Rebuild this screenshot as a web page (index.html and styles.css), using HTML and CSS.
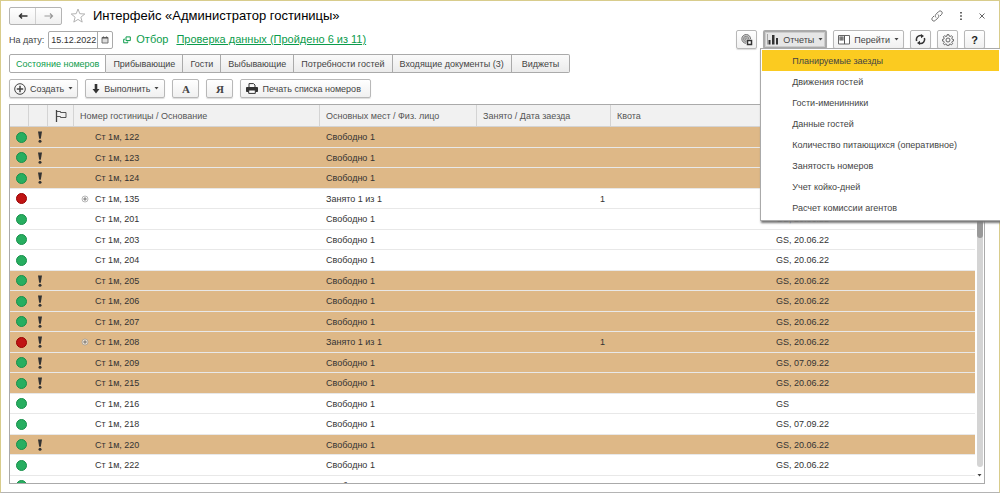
FILE: index.html
```html
<!DOCTYPE html>
<html lang="ru">
<head>
<meta charset="utf-8">
<title>Интерфейс «Администратор гостиницы»</title>
<link rel="stylesheet" href="styles.css">
</head>
<body>
<svg class="defs" aria-hidden="true">
  <symbol id="caret" viewBox="0 0 5 3"><path d="M.5 0h4L2.500 2.500z" fill="#444"/></symbol>
  <symbol id="bang" viewBox="0 0 6 12"><path d="M1 .5h4L3.800 7.800H2.200z" fill="#333"/><circle cx="3" cy="10.200" r="1.500" fill="#333"/></symbol>
  <symbol id="plus" viewBox="0 0 8 8"><circle cx="4" cy="4" r="3" fill="#fff" fill-opacity=".6" stroke="#999" stroke-width=".7"/><path d="M4 2.200v3.600M2.200 4h3.600" stroke="#666" stroke-width=".9"/></symbol>
</svg>
<main class="window">
  <header class="titlebar">
    <div class="history">
      <button class="history-btn" aria-label="Назад"><svg width="10" height="8" viewBox="0 0 10 8"><path d="M4 1.500 1.500 4 4 6.500M1.500 4H9.500" fill="none" stroke="#333" stroke-width="1.500"/></svg></button>
      <button class="history-btn" aria-label="Вперед"><svg width="10" height="8" viewBox="0 0 10 8"><path d="M6 1.500 8.500 4 6 6.500M8.500 4H.5" fill="none" stroke="#999" stroke-width="1.200"/></svg></button>
    </div>
    <svg class="star" width="16" height="15" viewBox="0 0 16 15"><path d="M8 1l1.800 4.700 5 .3-3.900 3.200 1.300 4.900L8 11.400l-4.200 2.700 1.300-4.900L1.200 6l5-.3z" fill="#fff" stroke="#aaa" stroke-width=".9"/></svg>
    <h1 class="title">Интерфейс «Администратор гостиницы»</h1>
    <div class="window-tools">
      <button class="plain" aria-label="Ссылка"><svg width="12" height="12" viewBox="0 0 12 12" fill="none" stroke="#666" stroke-width="1"><path d="M5 7.500C3.500 6 4.500 4.700 5.300 3.900L7.500 1.700C8.500.7 9.800.8 10.600 1.500s.8 2-.1 3L9 6M7 4.500c1.500 1.500.6 2.700-.2 3.500l-2.300 2.300c-1 1-2.300.9-3 .2s-.9-2 0-3L3 6"/></svg></button>
      <button class="plain" aria-label="Еще"><svg width="4" height="10" viewBox="0 0 4 10" fill="#666"><path d="M1 1h2v1.500H1zM1 4.200h2v1.500H1zM1 7.400h2v1.500H1z"/></svg></button>
      <button class="plain" aria-label="Закрыть"><svg width="6" height="6" viewBox="0 0 6 6"><path d="M.5.5l5 5m0-5l-5 5" stroke="#666"/></svg></button>
    </div>
  </header>

  <div class="filters">
    <label class="date-label" for="date">На дату:</label>
    <div class="date-box">
      <input class="date" id="date" type="text" value="15.12.2022">
      <button class="calendar" aria-label="Выбрать дату"><svg width="8" height="8" viewBox="0 0 8 8"><path d="M1 1.500h6v5.500H1z" fill="#ddd" stroke="#666" stroke-width=".9"/><path d="M1 2h6M2.500 .5v2m3-2v2" stroke="#555" stroke-width="1.200"/></svg></button>
    </div>
    <a class="link link-filter" href="#filter"><svg width="8" height="8" viewBox="0 0 8 8" fill="none" stroke="#0c9c4c"><path d="M3 .9h4.300v3.700H3z"/><path d="M2 3.200H.7v3.600h4V5.500"/></svg><span>Отбор</span></a>
    <a class="link link-check" href="#check">Проверка данных (Пройдено 6 из 11)</a>
    <div class="actions">
      <button class="btn icon-btn" aria-label="Обсуждения"><svg width="12" height="12" viewBox="0 0 12 12" fill="none" stroke="#777"><path d="M5 9.300A4.400 4.400 0 1 1 9.600 5" fill="#ccc"/><path d="M5 7.500A2.600 2.600 0 1 1 7.700 5M5 5.800A1 1 0 1 1 6 5" stroke-width=".8"/><path d="M6.500 6.500h4v4h-4z" fill="#fff" stroke="#333" stroke-width="1.500"/></svg></button>
      <div class="menu-anchor">
        <button class="btn pressed" aria-expanded="true"><svg width="12" height="11" viewBox="0 0 12 11"><path d="M.5 0v10.500" stroke="#888" stroke-width=".7"/><path d="M1.500 6h2v4.500h-2zM5 1h2.500v9.500H5zM9 4h2v6.500H9z" fill="#333"/></svg><span>Отчеты</span><svg class="caret"><use href="#caret"/></svg></button>
        <ul class="menu">
          <li><button class="menu-item selected">Планируемые заезды</button></li>
          <li><button class="menu-item">Движения гостей</button></li>
          <li><button class="menu-item">Гости-именинники</button></li>
          <li><button class="menu-item">Данные гостей</button></li>
          <li><button class="menu-item">Количество питающихся (оперативное)</button></li>
          <li><button class="menu-item">Занятость номеров</button></li>
          <li><button class="menu-item">Учет койко-дней</button></li>
          <li><button class="menu-item">Расчет комиссии агентов</button></li>
        </ul>
      </div>
      <button class="btn"><svg width="12" height="10" viewBox="0 0 12 10"><path d="M.5.5h11v8.500h-11z" fill="#fff" stroke="#666"/><path d="M1.500 1.500h4v4h-4z" fill="#555"/><path d="M2.800 1.500v4M4.200 1.500v4" stroke="#ccc" stroke-width=".5"/><path d="M6.500 1v8" stroke="#555"/></svg><span>Перейти</span><svg class="caret"><use href="#caret"/></svg></button>
      <button class="btn icon-btn" aria-label="Обновить"><svg width="11" height="11" viewBox="0 0 11 11"><path d="M1.700 7A4 4 0 0 1 6.500 1.700M9.300 4A4 4 0 0 1 4.500 9.300" fill="none" stroke="#333" stroke-width="1.500"/><path d="M6 0l3 2-3 2.300zM5 11L2 9l3-2.300z" fill="#333"/></svg></button>
      <button class="btn icon-btn" aria-label="Настройки"><svg width="12" height="12" viewBox="0 0 12 12" fill="none" stroke="#555"><path d="M5.200.6h1.600l.4 1.500 1 .4 1.300-.8 1.100 1.100-.8 1.400.4 1 1.400.3v1.500l-1.400.4-.4 1 .8 1.300-1.100 1.100-1.400-.8-1 .4-.3 1.400H5.200l-.4-1.400-1-.4-1.300.8-1.100-1.100.8-1.400-.4-1L.4 7V5.500l1.400-.4.4-1-.8-1.300 1.100-1.100 1.400.8 1-.4z" stroke-width=".9"/><circle cx="6" cy="6" r="2" stroke-width=".9"/></svg></button>
      <button class="btn icon-btn help" aria-label="Справка">?</button>
    </div>
  </div>

  <nav class="tabs">
    <button class="tab active">Состояние номеров</button>
    <button class="tab">Прибывающие</button>
    <button class="tab">Гости</button>
    <button class="tab">Выбывающие</button>
    <button class="tab">Потребности гостей</button>
    <button class="tab">Входящие документы (3)</button>
    <button class="tab wide">Виджеты</button>
  </nav>

  <div class="commands">
    <button class="btn"><svg width="12" height="12" viewBox="0 0 12 12" fill="none" stroke="#444"><circle cx="6" cy="6" r="5.300"/><path d="M6 2.800v6.400M2.800 6h6.400" stroke-width="1.500"/></svg><span>Создать</span><svg class="caret"><use href="#caret"/></svg></button>
    <button class="btn spaced"><svg width="8" height="10" viewBox="0 0 8 10"><path d="M2.700 0h2.600v5H7.500L4 9.500.5 5h2.200z" fill="#333"/></svg><span>Выполнить</span><svg class="caret"><use href="#caret"/></svg></button>
    <button class="btn letter">А</button>
    <button class="btn letter">Я</button>
    <button class="btn print"><svg width="12" height="11" viewBox="0 0 12 11" fill="none" stroke="#333"><path d="M3 4.500V.6h4.500L9 2v2.500"/><path d="M.5 4.500h11v4H.5z" fill="#333"/><path d="M2.700 7h6.600v3.400H2.700z" fill="#fff"/></svg><span>Печать списка номеров</span></button>
  </div>

  <section class="grid">
    <div class="grid-body">
      <table class="rooms">
        <colgroup><col class="c-state"><col class="c-mark"><col class="c-flag"><col class="c-room"><col class="c-person"><col class="c-busy"><col class="c-quota"><col></colgroup>
        <thead>
          <tr><th></th><th></th><th class="flag-cell"><svg width="12" height="12" viewBox="0 0 12 12" fill="none" stroke="#444"><path d="M1.500 0v12" stroke-width="1.300"/><path d="M1.500 1.500h4v1h5.500v5H5.500v-1h-4" stroke-width=".9"/></svg></th><th>Номер гостиницы / Основание</th><th>Основных мест / Физ. лицо</th><th>Занято / Дата заезда</th><th>Квота</th><th></th></tr>
        </thead>
        <tbody id="rows"></tbody>
      </table>
    </div>
    <div class="scroll"><div class="track"><div class="thumb"></div></div><svg class="scroll-arrow"><use href="#caret"/></svg></div>
  </section>
</main>
<script src="rows.js"></script>
</body>
</html>
```
FILE: rows.js
```js
const rooms = [
  ["122", 1, 0, ""],
  ["123", 1, 0, ""],
  ["124", 1, 0, ""],
  ["135", 0, 1, ""],
  ["201", 0, 0, "GS, 20.06.22"],
  ["203", 0, 0, "GS, 20.06.22"],
  ["204", 0, 0, "GS, 20.06.22"],
  ["205", 1, 0, "GS, 20.06.22"],
  ["206", 1, 0, "GS, 20.06.22"],
  ["207", 1, 0, "GS, 20.06.22"],
  ["208", 1, 1, "GS, 20.06.22"],
  ["209", 1, 0, "GS, 07.09.22"],
  ["215", 1, 0, "GS, 20.06.22"],
  ["216", 0, 0, "GS"],
  ["218", 0, 0, "GS, 07.09.22"],
  ["220", 1, 0, "GS, 20.06.22"],
  ["222", 0, 0, "GS, 20.06.22"],
  ["224", 0, 0, "GS, 20.06.22"]
];

document.getElementById("rows").innerHTML = rooms.map(([room, marked, busy, note]) => `
  <tr class="${marked ? "marked" : ""}">
    <td class="state"><span class="dot ${busy ? "busy" : ""}"></span></td>
    <td class="icon-cell">${marked ? '<svg class="bang"><use href="#bang"/></svg>' : ""}</td>
    <td></td>
    <td><div class="room"><span class="expander">${busy ? '<svg class="plus"><use href="#plus"/></svg>' : ""}</span>Ст 1м, ${room}</div></td>
    <td>${busy ? "Занято 1 из 1" : "Свободно 1"}</td>
    <td class="number">${busy ? "1" : ""}</td>
    <td></td>
    <td>${note}</td>
  </tr>`).join("");
```
FILE: styles.css
```css
* { box-sizing: border-box; }

body {
  margin: 0;
  font: 9px/12px "Liberation Sans", Arial, sans-serif;
  color: #444;
}

button, input { font: inherit; color: inherit; }
button { padding: 0; white-space: nowrap; }
svg { display: block; flex: none; }

.defs { position: absolute; width: 0; height: 0; }

.window {
  display: flex;
  flex-direction: column;
  height: 100vh;
  padding: 5px 14px 8px 8px;
  border: 1px solid #d8cc8c;
  border-bottom-color: #b4b4b4;
  background: #fff;
}

.titlebar { display: flex; align-items: center; height: 19px; }

.history {
  display: flex;
  width: 53px;
  height: 18px;
  border: 1px solid #b4b4b4;
  border-radius: 2px;
  background: linear-gradient(#fff, #f0f0f0);
}
.history-btn {
  display: flex;
  flex: 1;
  align-items: center;
  justify-content: center;
  border: 0;
  background: none;
}
.history-btn + .history-btn { border-left: 1px solid #d0d0d0; }

.star { margin: 0 7px 0 8px; }
.title { margin: 0; font-size: 13px; line-height: 18px; font-weight: 400; color: #000; }
.window-tools { display: flex; align-items: center; gap: 16px; margin-left: auto; }
.plain { border: 0; background: none; }

.filters { display: flex; align-items: center; height: 19px; margin-top: 5px; }
.date-label { margin-right: 4px; }
.date-box {
  display: flex;
  width: 65px;
  height: 18px;
  border: 1px solid #aaa;
  border-radius: 2px;
}
.date { flex: 1; min-width: 0; padding: 0 0 0 2px; border: 0; background: none; color: #333; }
.calendar {
  display: flex;
  width: 15px;
  align-items: center;
  justify-content: center;
  border: 0;
  border-left: 1px solid #aaa;
  background: none;
}

.link { font-size: 11px; line-height: 15px; color: #0c9c4c; }
.link-filter { display: flex; align-items: center; gap: 5px; margin: 0 8px 0 10px; text-decoration: none; }

.actions { display: flex; gap: 6px; margin-left: auto; }

.btn {
  display: flex;
  align-items: center;
  justify-content: center;
  gap: 4px;
  height: 19px;
  padding: 0 4px;
  border: 1px solid #b8b8b8;
  border-radius: 2px;
  background: linear-gradient(#fff, #f0f0f0);
  box-shadow: 0 1px 1px #ddd;
}
.icon-btn { width: 21px; padding: 0; }
.help { font-size: 11px; font-weight: 700; color: #222; }
.pressed { padding: 0 2px; border: 2px solid #aaa; outline: 1px solid #ccc; outline-offset: -3px; background: #e6e6e6; }
.spaced { padding: 0 5px 0 6px; }
.print { padding: 0 9px 0 5px; }
.caret { width: 5px; height: 3px; }

.menu-anchor { position: relative; }
.menu {
  position: absolute;
  z-index: 1;
  top: 18px;
  left: -3px;
  width: 241px;
  margin: 0;
  padding: 1px 1px 2px;
  border: 1px solid #aaa;
  background: #fff;
  box-shadow: 1px 2px 2px #777;
  list-style: none;
}
.menu-item {
  display: block;
  width: 100%;
  height: 21px;
  padding: 0 30px;
  border: 0;
  background: none;
  text-align: left;
}
.menu-item.selected { background: #fbcb20; }

.tabs { display: flex; height: 19px; margin-top: 5px; }
.tab {
  padding: 0 7px;
  border: 1px solid #aaa;
  border-left-width: 0;
  background: linear-gradient(#fafafa, #ebebeb);
}
.tab:first-child { border-left-width: 1px; border-radius: 2px 0 0 2px; }
.tab:last-child { border-radius: 0 2px 2px 0; }
.tab.active { padding: 0 6px; background: #fff; color: #0c9c4c; }
.tab.wide { padding: 0 10px; }

.commands { display: flex; gap: 7px; margin-top: 6px; }
.letter { width: 27px; font: 700 11px/12px "Liberation Serif", serif; }

.grid {
  display: flex;
  flex: 1;
  min-height: 0;
  margin-top: 6px;
  border: 1px solid #aaa;
}
.grid-body { flex: 1; min-width: 0; overflow: hidden; }

.rooms { width: 100%; table-layout: fixed; border-collapse: separate; border-spacing: 0; color: #333; }
.c-state, .c-mark { width: 19px; }
.c-flag { width: 26px; }
.c-room { width: 246px; }
.c-person { width: 157px; }
.c-busy { width: 134px; }
.c-quota { width: 159px; }

.rooms th {
  height: 22px;
  padding: 0 6px;
  border-right: 1px solid #d4d4d4;
  border-bottom: 1px solid #d4d4d4;
  background: #f1f1f1;
  color: #555;
  font-weight: 400;
  text-align: left;
}
.rooms td { height: 21px; padding: 0 6px; border-bottom: 1px solid #e8e8e8; white-space: nowrap; }
.rooms tr:nth-child(even) td { height: 20px; }
.rooms .marked td { background: #deb887; }
.rooms .icon-cell { padding: 0 4px 0 6px; }
.rooms .state { padding: 0 2px 0 6px; }
.icon-cell svg, .flag-cell svg { margin: 0 auto; }
.rooms .number { text-align: right; }

.dot {
  display: block;
  width: 11px;
  height: 11px;
  border: 1px solid #17904a;
  border-radius: 50%;
  background: #27ae60;
}
.dot.busy { border-color: #900; background: #c01414; }
.bang { width: 6px; height: 12px; }
.room { display: flex; align-items: center; }
.expander { width: 15px; }
.plus { width: 8px; height: 8px; margin-left: 1px; }

.scroll { display: flex; flex-direction: column; align-items: center; width: 9px; padding: 22px 0 6px; }
.track { flex: 1; width: 6px; border-radius: 3px; background: #d4d4d4; }
.thumb { height: 111px; border-radius: 3px; background: #999; }
.scroll-arrow { width: 5px; height: 3px; margin-top: 7px; }
```
